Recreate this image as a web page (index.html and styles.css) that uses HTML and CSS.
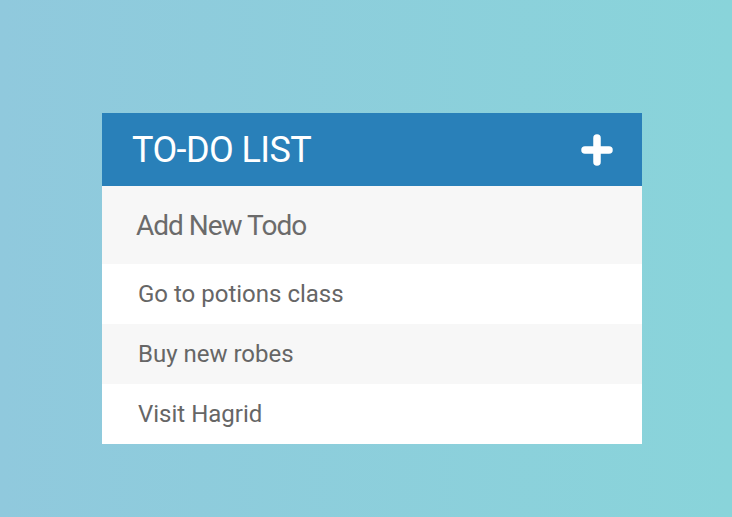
FILE: index.html
```html
<!DOCTYPE html>
<html>
<head>
<meta charset="utf-8">
<link rel="stylesheet" href="styles.css">
</head>
<body>
<div class="card">
  <div class="header">
    <h1 class="title">TO-DO LIST</h1>
    <svg class="plus" width="32" height="32" viewBox="0 0 32 32"><path d="M16 4 V28 M4 16 H28" stroke="#fff" stroke-width="7.5" stroke-linecap="round" fill="none"/></svg>
  </div>
  <div class="add"><span class="placeholder">Add New Todo</span></div>
  <ul class="list">
    <li class="item">Go to potions class</li>
    <li class="item alt">Buy new robes</li>
    <li class="item">Visit Hagrid</li>
  </ul>
</div>
</body>
</html>
```
FILE: styles.css
```css
html, body { margin: 0; padding: 0; }
body {
  width: 732px;
  height: 517px;
  background: linear-gradient(90deg, #90c9dd, #89d4da);
  font-family: Roboto, "Noto Sans", sans-serif;
  padding: 113px 0 0 102px;
  box-sizing: border-box;
}
.card { width: 540px; background: #fff; }
.header {
  height: 73px;
  background: #2980b9;
  display: flex;
  align-items: center;
  justify-content: space-between;
  padding: 0 29px 0 30px;
  box-sizing: border-box;
}
.title { margin: 0; font-weight: 400; font-size: 36px; letter-spacing: -0.6px; color: #fff; line-height: 1; }
.plus { display: block; }
.add {
  height: 78px;
  background: #f7f7f7;
  display: flex;
  align-items: center;
  padding-left: 34px;
  box-sizing: border-box;
}
.placeholder { font-size: 28px; letter-spacing: -1px; color: #6b6b6b; }
.list { list-style: none; margin: 0; padding: 0; }
.item {
  height: 60px;
  line-height: 60px;
  padding-left: 36px;
  font-size: 24px;
  color: #666;
  background: #fff;
}
.item.alt { background: #f7f7f7; }
```
